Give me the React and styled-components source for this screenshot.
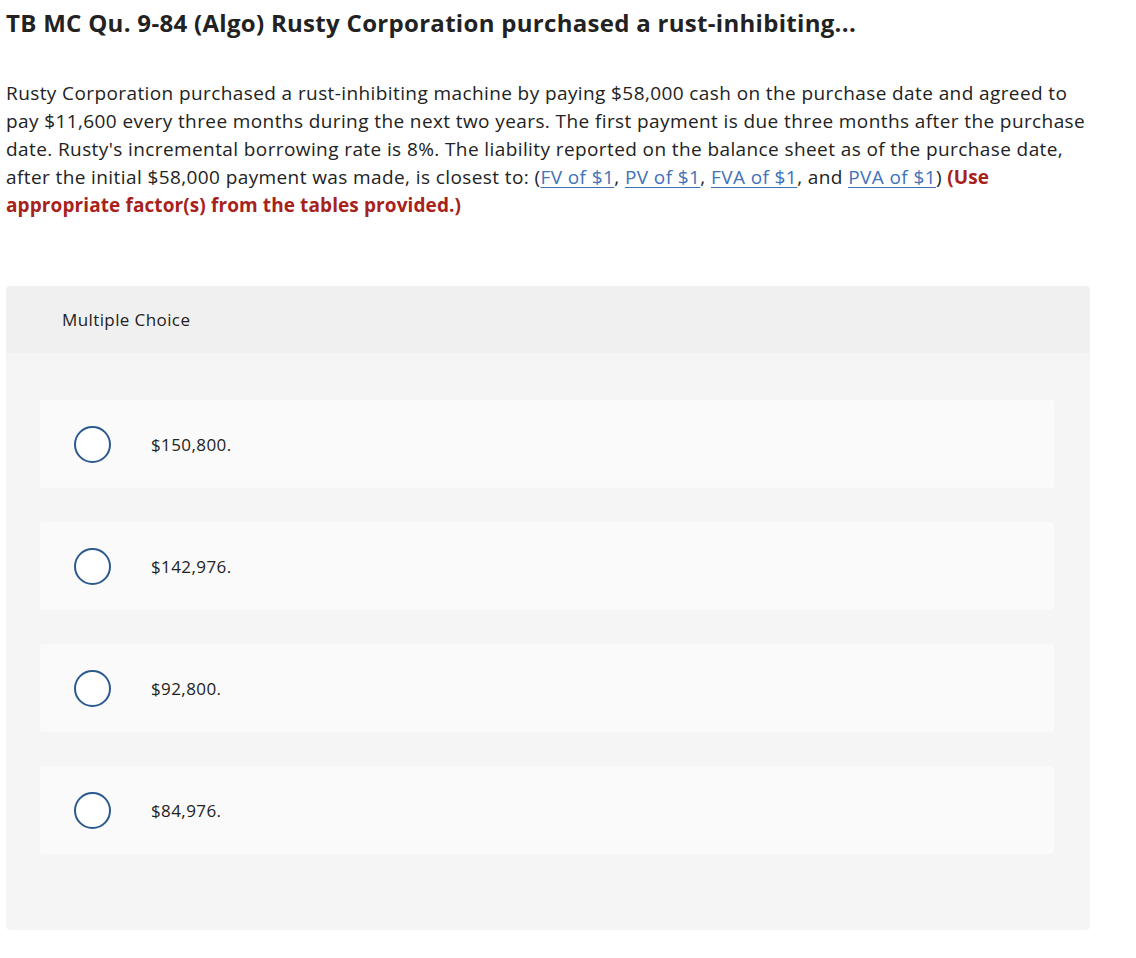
import styled, { createGlobalStyle } from "styled-components";

const GlobalStyle = createGlobalStyle`
  body {
    margin: 0;
    background: #fff;
    font-family: "Open Sans", "Liberation Sans", sans-serif;
    color: #222;
  }
`;

const choices = ["$150,800.", "$142,976.", "$92,800.", "$84,976."];
const links = ["FV of $1", "PV of $1", "FVA of $1", "PVA of $1"];

const App = () => {
  return (
    <>
      <GlobalStyle />
      <Page>
        <Title>TB MC Qu. 9-84 (Algo) Rusty Corporation purchased a rust-inhibiting...</Title>
        <Question>
          Rusty Corporation purchased a rust-inhibiting machine by paying $58,000 cash on the
          purchase date and agreed to pay $11,600 every three months during the next two years.
          The first payment is due three months after the purchase date. Rusty's incremental
          borrowing rate is 8%. The liability reported on the balance sheet as of the purchase
          date, after the initial $58,000 payment was made, is closest to: (
          <Link href="#">{links[0]}</Link>, <Link href="#">{links[1]}</Link>,{" "}
          <Link href="#">{links[2]}</Link>, and <Link href="#">{links[3]}</Link>){" "}
          <Hint>(Use appropriate factor(s) from the tables provided.)</Hint>
        </Question>
        <Panel>
          <PanelHeader>Multiple Choice</PanelHeader>
          <PanelBody>
            {choices.map((c) => (
              <Choice key={c}>
                <Radio />
                <ChoiceText>{c}</ChoiceText>
              </Choice>
            ))}
          </PanelBody>
        </Panel>
      </Page>
    </>
  );
};
export default App;

const Page = styled.div`
  padding: 0 6px;
  width: 1084px;
`;

const Title = styled.h1`
  margin: 0;
  padding-top: 8px;
  font-size: 24px;
  line-height: 30px;
  font-weight: 700;
  letter-spacing: 0.3px;
  color: #222;
`;

const Question = styled.p`
  margin: 41px 0 0;
  width: 1092px;
  font-size: 19px;
  line-height: 28px;
  letter-spacing: 0.4px;
  color: #222;
`;

const Link = styled.a`
  color: #3f72b8;
  text-decoration: underline;
  text-underline-offset: 3px;
`;

const Hint = styled.span`
  color: #a7221b;
  font-weight: 700;
  letter-spacing: 0.1px;
`;

const Panel = styled.div`
  margin-top: 67px;
  width: 1084px;
  border-radius: 4px;
  overflow: hidden;
  background: #f5f5f5;
`;

const PanelHeader = styled.div`
  height: 67px;
  display: flex;
  align-items: center;
  padding-left: 56px;
  background: #f0f0f0;
  font-size: 17px;
  letter-spacing: 0.4px;
  color: #222;
`;

const PanelBody = styled.div`
  display: flex;
  flex-direction: column;
  gap: 34px;
  padding: 47px 36px 76px 34px;
`;

const Choice = styled.div`
  height: 88px;
  display: flex;
  align-items: center;
  padding-left: 34px;
  background: #fafafa;
  border-radius: 4px;
`;

const Radio = styled.span`
  width: 33px;
  height: 33px;
  border: 2px solid #2b5a8e;
  border-radius: 50%;
  background: #fff;
  flex-shrink: 0;
`;

const ChoiceText = styled.span`
  margin-left: 40px;
  font-size: 17px;
  letter-spacing: 0.4px;
  color: #222;
`;
